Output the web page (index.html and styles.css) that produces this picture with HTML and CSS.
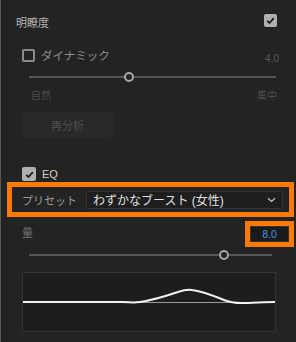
FILE: index.html
```html
<!DOCTYPE html>
<html>

<head>
    <meta charset="utf-8" />
    <title>明瞭度</title>
    <link rel="stylesheet" href="styles.css">
</head>

<body>
    <div class="panel">
        <div class="header">
            <span class="title">明瞭度</span>
            <span class="check checked">
                <svg viewBox="0 0 13 13"><path d="M3.2 6.8 L5.5 9 L9.8 4.2" /></svg>
            </span>
        </div>

        <div class="section">
            <div class="row dyn">
                <span class="check"></span>
                <span class="label dim">ダイナミック</span>
                <span class="num">4.0</span>
            </div>
            <div class="slider s1">
                <div class="track"></div>
                <div class="thumb" style="left: 40.5%"></div>
            </div>
            <div class="scale">
                <span>自然</span>
                <span>集中</span>
            </div>
            <div class="button">再分析</div>

            <div class="row eq">
                <span class="check checked">
                    <svg viewBox="0 0 13 13"><path d="M3.2 6.8 L5.5 9 L9.8 4.2" /></svg>
                </span>
                <span class="label">EQ</span>
            </div>

            <div class="preset hl">
                <span class="preset-label">プリセット</span>
                <div class="select">
                    <span>わずかなブースト (女性)</span>
                    <svg class="chev" viewBox="0 0 10 6"><path d="M1 1 L5 4.5 L9 1" /></svg>
                </div>
            </div>

            <div class="amount">
                <span class="amount-label">量</span>
                <span class="value hl"><span class="value-box">8.0</span></span>
            </div>
            <div class="slider s2">
                <div class="track"></div>
                <div class="thumb" style="left: 80.2%"></div>
            </div>

            <div class="graph">
                <svg viewBox="0 0 254 60" width="254" height="60">
                    <line x1="0" y1="30.5" x2="254" y2="30.5" class="base" />
                    <path d="M0 30 L100 30 C108 30 110 31 118 30 C132 28 144 24 156 20 C162 18 166 17.5 170 18 C180 19 192 24 202 28 C208 30.5 212 31 220 31 C228 31 236 30 254 30" class="curve" />
                </svg>
            </div>
        </div>
    </div>
</body>

</html>
```

FILE: styles.css
```css
* {
    margin: 0;
    padding: 0;
    box-sizing: border-box;
}

html {
    height: 100%;
    font-family: "Liberation Sans", "Noto Sans CJK JP", sans-serif;
}

body {
    height: 100%;
    background-color: #232323;
    border-left: 1px solid #595959;
    overflow: hidden;
}

.panel {
    padding: 14px 19px 0 15px;
}

.header {
    display: flex;
    align-items: center;
    justify-content: space-between;
    height: 13px;
}

.title {
    font-size: 11px;
    color: #b4b4b4;
    margin-top: 3px;
}

.check {
    width: 13px;
    height: 13px;
    border: 2px solid #8a8a8a;
    border-radius: 2px;
    display: flex;
    align-items: center;
    justify-content: center;
    flex-shrink: 0;
}

.check.checked {
    border: none;
    background-color: #b0b0b0;
}

.check svg {
    width: 13px;
    height: 13px;
    fill: none;
    stroke: #1e1e1e;
    stroke-width: 1.8;
}

.section {
    padding-left: 6px;
}

.row {
    display: flex;
    align-items: center;
    height: 13px;
}

.label {
    font-size: 11px;
    color: #cfcfcf;
    margin-left: 6px;
}

.label.dim {
    color: #8e8e8e;
    font-size: 11.5px;
    margin-top: -2px;
}

.dyn {
    margin-top: 22px;
}

.num {
    margin-left: auto;
    margin-right: -2px;
    margin-top: 5px;
    font-size: 10px;
    color: #5c5c5c;
}

.slider {
    position: relative;
    height: 10px;
}

.slider .track {
    position: absolute;
    left: 0;
    right: 0;
    top: 4px;
    height: 2px;
    background-color: #555;
}

.slider .thumb {
    position: absolute;
    top: 0;
    width: 10px;
    height: 10px;
    margin-left: -5px;
    border: 2px solid #a8a8a8;
    border-radius: 50%;
    background-color: #232323;
}

.s1 {
    margin: 10px 1px 0 7px;
}

.scale {
    display: flex;
    justify-content: space-between;
    margin: 8px 0 0 9px;
    font-size: 10px;
    line-height: 12px;
    color: #4c4c4c;
}

.button {
    margin-top: 10px;
    width: 91px;
    height: 25px;
    border-radius: 3px;
    background-color: #292929;
    color: #505050;
    font-size: 11px;
    display: flex;
    align-items: center;
    justify-content: center;
}

.eq {
    margin-top: 30px;
    height: 14px;
}

.eq .check {
    width: 14px;
    height: 14px;
}

.hl {
    border: 5px solid #ff7a00;
}

.preset {
    margin: 1px -17px 0 -15px;
    height: 35px;
    padding: 0 6px 0 10px;
    display: flex;
    align-items: center;
}

.preset-label {
    font-size: 11px;
    color: #9c9c9c;
    width: 64px;
    flex-shrink: 0;
}

.select {
    flex: 1;
    height: 18px;
    border: 1px solid #333;
    border-radius: 2px;
    background-color: #1e1e1e;
    display: flex;
    align-items: center;
    justify-content: space-between;
    padding: 0 6px 0 6px;
    font-size: 12px;
    color: #e0e0e0;
}

.chev {
    width: 9px;
    height: 6px;
    fill: none;
    stroke: #c8c8c8;
    stroke-width: 1.3;
}

.amount {
    display: flex;
    justify-content: space-between;
    margin: 4px -17px 0 0;
}

.amount-label {
    font-size: 11px;
    color: #707070;
    margin-top: 3px;
}

.value {
    display: block;
    width: 49px;
    height: 26px;
}

.value-box {
    display: flex;
    align-items: center;
    justify-content: center;
    height: 16px;
    background-color: #1a1a1a;
    border: 1px solid #333;
    font-size: 10.5px;
    color: #4a90e2;
}

.s2 {
    margin: 3px 5px 0 7px;
}

.graph {
    margin: 12px 1px 0 0;
    height: 60px;
    border: 1px solid #333;
    background-color: #1d1d1d;
    overflow: hidden;
}

.graph svg {
    display: block;
    margin: -1px;
}

.base {
    stroke: #9a9a9a;
    stroke-width: 1;
}

.curve {
    fill: none;
    stroke: #f2f2f2;
    stroke-width: 2;
}
```
